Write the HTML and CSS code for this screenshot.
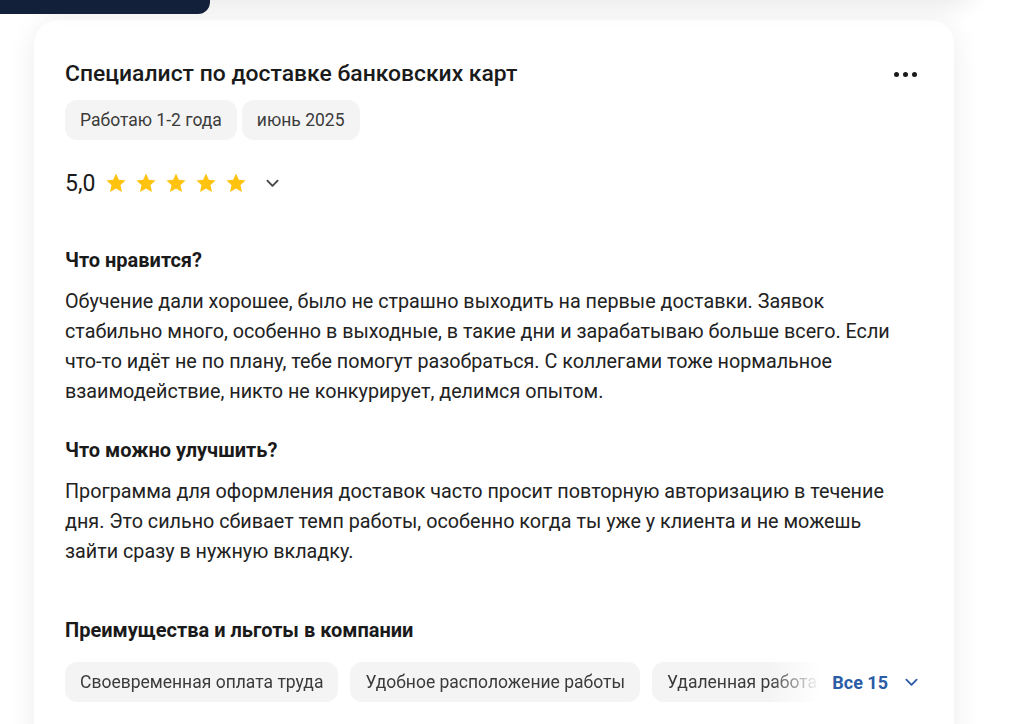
FILE: index.html
```html
<!DOCTYPE html>
<html lang="ru">
<head>
<meta charset="utf-8">
<link rel="stylesheet" href="styles.css">
</head>
<body>
<div class="page">
  <div class="prev-card"></div>
  <div class="tab"></div>
  <article class="card">
    <header class="card-head">
      <h2 class="title">Специалист по доставке банковских карт</h2>
      <button class="more" aria-label="Ещё"><span></span><span></span><span></span></button>
    </header>
    <div class="tags">
      <span class="tag">Работаю 1-2 года</span>
      <span class="tag">июнь 2025</span>
    </div>
    <div class="rating">
      <span class="score">5,0</span>
      <div class="stars">
        <svg viewBox="0 0 24 24"><path d="M12 1.6l3.1 6.9 7.4.8-5.6 5 1.6 7.4L12 17.9l-6.5 3.8 1.6-7.4-5.6-5 7.4-.8z"/></svg>
        <svg viewBox="0 0 24 24"><path d="M12 1.6l3.1 6.9 7.4.8-5.6 5 1.6 7.4L12 17.9l-6.5 3.8 1.6-7.4-5.6-5 7.4-.8z"/></svg>
        <svg viewBox="0 0 24 24"><path d="M12 1.6l3.1 6.9 7.4.8-5.6 5 1.6 7.4L12 17.9l-6.5 3.8 1.6-7.4-5.6-5 7.4-.8z"/></svg>
        <svg viewBox="0 0 24 24"><path d="M12 1.6l3.1 6.9 7.4.8-5.6 5 1.6 7.4L12 17.9l-6.5 3.8 1.6-7.4-5.6-5 7.4-.8z"/></svg>
        <svg viewBox="0 0 24 24"><path d="M12 1.6l3.1 6.9 7.4.8-5.6 5 1.6 7.4L12 17.9l-6.5 3.8 1.6-7.4-5.6-5 7.4-.8z"/></svg>
      </div>
      <svg class="chev" viewBox="0 0 14 9"><path d="M1.5 1.5L7 7l5.5-5.5"/></svg>
    </div>

    <h3 class="sect first">Что нравится?</h3>
    <p class="text">Обучение дали хорошее, было не страшно выходить на первые доставки. Заявок стабильно много, особенно в выходные, в такие дни и зарабатываю больше всего. Если что-то идёт не по плану, тебе помогут разобраться. С коллегами тоже нормальное взаимодействие, никто не конкурирует, делимся опытом.</p>

    <h3 class="sect second">Что можно улучшить?</h3>
    <p class="text">Программа для оформления доставок часто просит повторную авторизацию в течение дня. Это сильно сбивает темп работы, особенно когда ты уже у клиента и не можешь зайти сразу в нужную вкладку.</p>

    <h3 class="sect third">Преимущества и льготы в компании</h3>
    <div class="benefits">
      <div class="benefit-list">
        <span class="tag">Своевременная оплата труда</span>
        <span class="tag">Удобное расположение работы</span>
        <span class="tag">Удаленная работа</span>
      </div>
      <button class="all">Все 15 <svg class="chev blue" viewBox="0 0 14 9"><path d="M1.5 1.5L7 7l5.5-5.5"/></svg></button>
    </div>
  </article>
</div>
</body>
</html>
```
FILE: styles.css
```css
* { box-sizing: border-box; }
html, body { margin: 0; padding: 0; background: #ffffff; }
body {
  font-family: Roboto, "Noto Sans", "Liberation Sans", sans-serif;
  color: #1d1d1f;
  overflow: hidden;
}
.page {
  position: relative;
  padding: 20px 0 40px 34px;
}
.prev-card {
  position: absolute;
  left: 34px;
  top: -40px;
  width: 940px;
  height: 40px;
  background: #fff;
  border-radius: 0 0 24px 24px;
  box-shadow: 0 6px 24px rgba(0, 0, 0, 0.09);
}
.tab {
  position: absolute;
  left: 0;
  top: 0;
  width: 210px;
  height: 14px;
  background: #13203a;
  border-bottom-right-radius: 12px;
}
.card {
  width: 920px;
  background: #fff;
  border-radius: 24px;
  box-shadow: 0 4px 28px rgba(0, 0, 0, 0.08);
  padding: 40px 36px 60px 31px;
}
.card-head {
  display: flex;
  align-items: center;
  justify-content: space-between;
}
.title {
  margin: 0;
  font-size: 22.9px;
  line-height: 28px;
  font-weight: 500;
  color: #1a1a1a;
}
.more {
  display: flex;
  gap: 4px;
  background: none;
  border: 0;
  padding: 0;
  margin-right: 1px;
  cursor: pointer;
}
.more span {
  width: 5px;
  height: 5px;
  border-radius: 50%;
  background: #1a1a1a;
}
.tags {
  display: flex;
  gap: 5px;
  margin-top: 12px;
}
.tag {
  display: inline-flex;
  align-items: center;
  height: 40px;
  padding: 0 15px;
  border-radius: 12px;
  background: #f4f4f4;
  font-size: 17.5px;
  color: #3b3b3b;
  white-space: nowrap;
  flex: none;
}
.rating {
  display: flex;
  align-items: center;
  height: 30px;
  margin-top: 28px;
}
.score {
  font-size: 23px;
  color: #1a1a1a;
  margin-right: 10px;
}
.stars {
  display: flex;
  gap: 8px;
}
.stars svg {
  width: 22px;
  height: 22px;
  fill: #ffc20e;
}
.chev {
  width: 13px;
  height: 9px;
  fill: none;
  stroke: #444;
  stroke-width: 2;
  stroke-linecap: round;
  stroke-linejoin: round;
  margin-left: 19px;
}
.sect {
  margin: 0;
  font-size: 20px;
  line-height: 24px;
  font-weight: 700;
  color: #1a1a1a;
}
.sect.first { margin-top: 50px; }
.sect.second { margin-top: 31px; }
.sect.third { margin-top: 51px; }
.text {
  margin: 15px 0 0;
  font-size: 19.75px;
  line-height: 30px;
  color: #222;
}
.benefits {
  display: flex;
  align-items: center;
  margin-top: 20px;
}
.benefit-list {
  flex: 1;
  min-width: 0;
  display: flex;
  gap: 12px;
  overflow: hidden;
  -webkit-mask-image: linear-gradient(to right, #000 calc(100% - 50px), transparent 100%);
  mask-image: linear-gradient(to right, #000 calc(100% - 50px), transparent 100%);
}
.all {
  flex: none;
  display: flex;
  align-items: center;
  background: none;
  border: 0;
  padding: 0;
  margin-left: 12px;
  font-family: inherit;
  font-size: 18px;
  font-weight: 700;
  color: #2b5ca6;
  cursor: pointer;
}
.chev.blue {
  stroke: #2b5ca6;
  margin-left: 17px;
}
```
